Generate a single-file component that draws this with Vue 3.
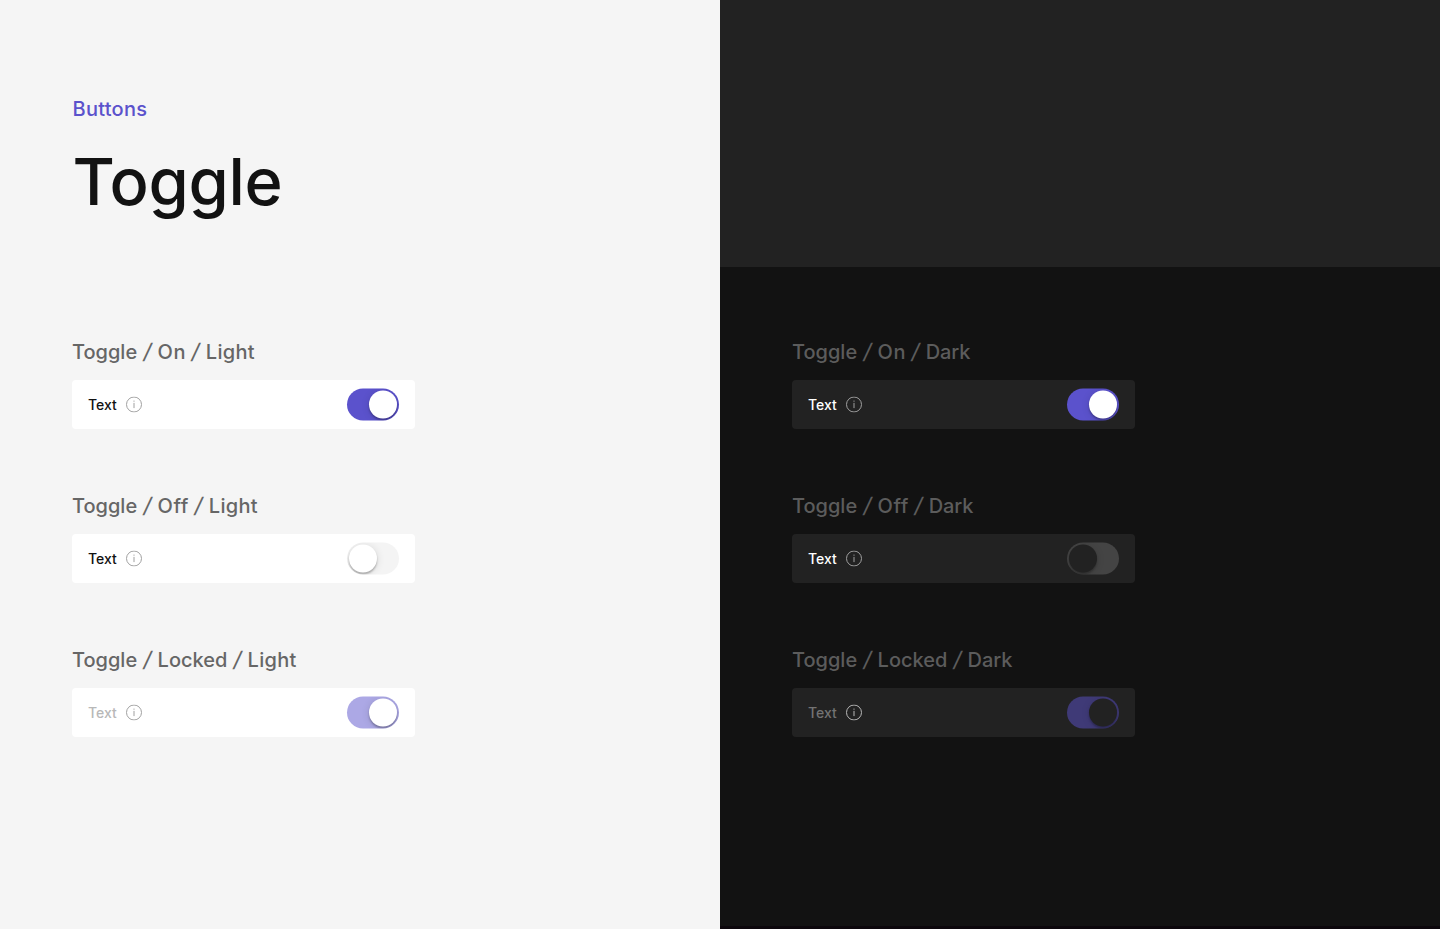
<script setup>
const states = ['On', 'Off', 'Locked']
const themes = ['Light', 'Dark']
</script>

<template>
  <main class="page">
    <section v-for="theme in themes" :key="theme" class="panel" :class="theme.toLowerCase()">
      <header class="head">
        <template v-if="theme === 'Light'">
          <p class="category">Buttons</p>
          <h1 class="title">Toggle</h1>
        </template>
      </header>
      <div class="list">
        <article v-for="state in states" :key="state" class="item" :class="state.toLowerCase()">
          <h2 class="name">
            <span class="word w-toggle">Toggle</span>
            <span class="slash">/</span>
            <span class="word" :class="'w-' + state.toLowerCase()">{{ state }}</span>
            <span class="slash">/</span>
            <span class="word" :class="'w-' + theme.toLowerCase()">{{ theme }}</span>
          </h2>
          <div class="card">
            <span class="text">Text</span>
            <svg class="info" width="16" height="16" viewBox="0 0 16 16" fill="none">
              <circle cx="8" cy="8" r="7.5" stroke="currentColor" />
              <path d="M8 6.4V11.6" stroke="currentColor" />
              <circle cx="8" cy="4.6" r="0.7" fill="currentColor" />
            </svg>
            <span class="switch"><span class="knob"></span></span>
          </div>
        </article>
      </div>
    </section>
  </main>
</template>

<style>
body { margin: 0; }
</style>

<style scoped>
.page {
  display: grid;
  grid-template-columns: 720px 720px;
  width: 1440px;
  height: 929px;
  overflow: hidden;
  font-family: Inter, "Liberation Sans", sans-serif;
}
.panel { height: 929px; box-sizing: border-box; }
.light { background: #f5f5f5; }
.dark { background: #121212; border-bottom: 3px solid #0c070c; }
.head { height: 267px; box-sizing: border-box; padding: 96px 72px 0; }
.panel.dark .head { background: #222222; }
.category { margin: 0 0 0 0.6px; font-size: 20px; line-height: 26px; font-weight: 500; letter-spacing: 0.25px; color: #5b52cc; }
.title { margin: 20px 0 0 0.5px; font-size: 65px; line-height: 79px; font-weight: 500; letter-spacing: -0.3px; color: #121212; }
.list { padding: 72px 72px 0; }
.item { height: 154px; }
.name { display: flex; margin: 0; height: 41px; font-size: 20px; line-height: 26px; font-weight: 500; color: #666666; white-space: nowrap; }
.dark .name { color: #5c5c5c; }
.w-toggle { width: 65.6px; letter-spacing: 0; }
.slash { width: 20px; text-align: center; transform: translateX(-2px) skewX(-12deg) scaleY(1.06); }
.w-on { width: 28.2px; letter-spacing: 0.5px; }
.w-off { width: 31.2px; letter-spacing: 0.5px; }
.w-locked { width: 70px; letter-spacing: 0; }
.w-light { letter-spacing: 0.3px; }
.w-dark { letter-spacing: -0.1px; }
.card {
  display: flex;
  align-items: center;
  width: 343px;
  height: 49px;
  box-sizing: border-box;
  padding: 0 16px 1px;
  border-radius: 4px;
  background: #ffffff;
}
.text { width: 38px; font-size: 14px; line-height: 20px; font-weight: 500; color: #121212; transform: translateY(0.5px); }
.info { color: #a0a0a0; transform: translateY(0.5px); }
.switch {
  box-sizing: border-box;
  display: flex;
  justify-content: flex-end;
  margin-left: auto;
  width: 52px;
  height: 32px;
  padding: 2px;
  border-radius: 16px;
  background: #5b52cc;
  overflow: hidden;
  transform: translateY(0.5px);
}
.knob { width: 28px; height: 28px; border-radius: 50%; background: #ffffff; box-shadow: 0 2px 2px rgba(0, 0, 0, 0.25), 0 1px 8px rgba(0, 0, 0, 0.12); }
.off .switch { background: #f4f4f4; justify-content: flex-start; }
.locked .switch { background: #aca8e5; }
.locked .text { color: #b8b8b8; }
.dark .card { background: #222222; }
.dark .text { color: #ffffff; }
.dark .off .switch { background: #444444; }
.dark .off .knob, .dark .locked .knob { background: #222222; }
.dark .locked .switch { background: #3f3a77; }
.dark .locked .text { color: #737373; }
.dark .locked .info { color: #b8b8b8; }
</style>
